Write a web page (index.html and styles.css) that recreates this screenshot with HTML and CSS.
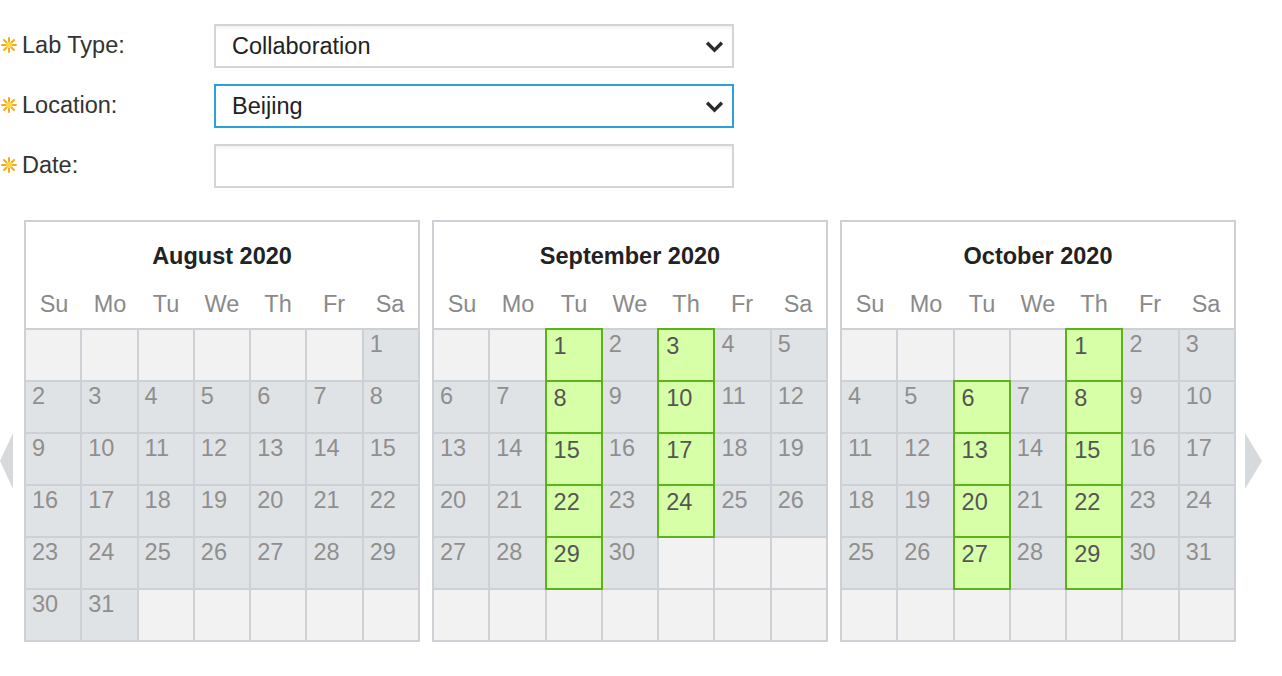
FILE: index.html
```html
<!DOCTYPE html>
<html>
<head>
<meta charset="utf-8">
<link rel="stylesheet" href="styles.css">
</head>
<body>
<div class="form">
  <div class="row">
    <label class="lbl"><svg class="req" viewBox="0 0 16 16"><g stroke="#f7a81b" stroke-width="2" stroke-linecap="round"><line x1="8" y1="1" x2="8" y2="15"/><line x1="1" y1="8" x2="15" y2="8"/><line x1="3" y1="3" x2="13" y2="13"/><line x1="13" y1="3" x2="3" y2="13"/></g><circle cx="8" cy="8" r="3.2" fill="#ffd84a"/></svg>Lab Type:</label>
    <div class="field select"><span>Collaboration</span><svg class="chev" viewBox="0 0 18 12"><path d="M2 2.5 9 9.5 16 2.5" fill="none" stroke="#2b2b2b" stroke-width="3.2"/></svg></div>
  </div>
  <div class="row">
    <label class="lbl"><svg class="req" viewBox="0 0 16 16"><g stroke="#f7a81b" stroke-width="2" stroke-linecap="round"><line x1="8" y1="1" x2="8" y2="15"/><line x1="1" y1="8" x2="15" y2="8"/><line x1="3" y1="3" x2="13" y2="13"/><line x1="13" y1="3" x2="3" y2="13"/></g><circle cx="8" cy="8" r="3.2" fill="#ffd84a"/></svg>Location:</label>
    <div class="field select focus"><span>Beijing</span><svg class="chev" viewBox="0 0 18 12"><path d="M2 2.5 9 9.5 16 2.5" fill="none" stroke="#2b2b2b" stroke-width="3.2"/></svg></div>
  </div>
  <div class="row">
    <label class="lbl"><svg class="req" viewBox="0 0 16 16"><g stroke="#f7a81b" stroke-width="2" stroke-linecap="round"><line x1="8" y1="1" x2="8" y2="15"/><line x1="1" y1="8" x2="15" y2="8"/><line x1="3" y1="3" x2="13" y2="13"/><line x1="13" y1="3" x2="3" y2="13"/></g><circle cx="8" cy="8" r="3.2" fill="#ffd84a"/></svg>Date:</label>
    <div class="field input"></div>
  </div>
</div>

<div class="cals">
  <div class="arrow left"></div>

  <div class="cal">
    <div class="title">August 2020</div>
    <div class="dows"><span>Su</span><span>Mo</span><span>Tu</span><span>We</span><span>Th</span><span>Fr</span><span>Sa</span></div>
    <div class="grid">
      <div class="c e"></div><div class="c e"></div><div class="c e"></div><div class="c e"></div><div class="c e"></div><div class="c e"></div><div class="c">1</div>
      <div class="c">2</div><div class="c">3</div><div class="c">4</div><div class="c">5</div><div class="c">6</div><div class="c">7</div><div class="c">8</div>
      <div class="c">9</div><div class="c">10</div><div class="c">11</div><div class="c">12</div><div class="c">13</div><div class="c">14</div><div class="c">15</div>
      <div class="c">16</div><div class="c">17</div><div class="c">18</div><div class="c">19</div><div class="c">20</div><div class="c">21</div><div class="c">22</div>
      <div class="c">23</div><div class="c">24</div><div class="c">25</div><div class="c">26</div><div class="c">27</div><div class="c">28</div><div class="c">29</div>
      <div class="c">30</div><div class="c">31</div><div class="c e"></div><div class="c e"></div><div class="c e"></div><div class="c e"></div><div class="c e"></div>
    </div>
  </div>

  <div class="cal">
    <div class="title">September 2020</div>
    <div class="dows"><span>Su</span><span>Mo</span><span>Tu</span><span>We</span><span>Th</span><span>Fr</span><span>Sa</span></div>
    <div class="grid">
      <div class="c e"></div><div class="c e"></div><div class="c g">1</div><div class="c">2</div><div class="c g">3</div><div class="c">4</div><div class="c">5</div>
      <div class="c">6</div><div class="c">7</div><div class="c g">8</div><div class="c">9</div><div class="c g">10</div><div class="c">11</div><div class="c">12</div>
      <div class="c">13</div><div class="c">14</div><div class="c g">15</div><div class="c">16</div><div class="c g">17</div><div class="c">18</div><div class="c">19</div>
      <div class="c">20</div><div class="c">21</div><div class="c g">22</div><div class="c">23</div><div class="c g">24</div><div class="c">25</div><div class="c">26</div>
      <div class="c">27</div><div class="c">28</div><div class="c g">29</div><div class="c">30</div><div class="c e"></div><div class="c e"></div><div class="c e"></div>
      <div class="c e"></div><div class="c e"></div><div class="c e"></div><div class="c e"></div><div class="c e"></div><div class="c e"></div><div class="c e"></div>
    </div>
  </div>

  <div class="cal">
    <div class="title">October 2020</div>
    <div class="dows"><span>Su</span><span>Mo</span><span>Tu</span><span>We</span><span>Th</span><span>Fr</span><span>Sa</span></div>
    <div class="grid">
      <div class="c e"></div><div class="c e"></div><div class="c e"></div><div class="c e"></div><div class="c g">1</div><div class="c">2</div><div class="c">3</div>
      <div class="c">4</div><div class="c">5</div><div class="c g">6</div><div class="c">7</div><div class="c g">8</div><div class="c">9</div><div class="c">10</div>
      <div class="c">11</div><div class="c">12</div><div class="c g">13</div><div class="c">14</div><div class="c g">15</div><div class="c">16</div><div class="c">17</div>
      <div class="c">18</div><div class="c">19</div><div class="c g">20</div><div class="c">21</div><div class="c g">22</div><div class="c">23</div><div class="c">24</div>
      <div class="c">25</div><div class="c">26</div><div class="c g">27</div><div class="c">28</div><div class="c g">29</div><div class="c">30</div><div class="c">31</div>
      <div class="c e"></div><div class="c e"></div><div class="c e"></div><div class="c e"></div><div class="c e"></div><div class="c e"></div><div class="c e"></div>
    </div>
  </div>

  <div class="arrow right"></div>
</div>
</body>
</html>
```
FILE: styles.css
```css
html, body {
  margin: 0;
  padding: 0;
  background: #fff;
}
body {
  font-family: "Liberation Sans", Arial, Helvetica, sans-serif;
  color: #333;
}
.form {
  padding-top: 24px;
  display: flex;
  flex-direction: column;
  gap: 16px;
}
.row {
  display: flex;
  align-items: center;
  height: 44px;
}
.lbl {
  width: 214px;
  display: flex;
  align-items: center;
  font-size: 23.5px;
  color: #333;
  margin-top: -2px;
}
.req {
  width: 16px;
  height: 16px;
  margin-left: 1px;
  margin-right: 5px;
}
.field {
  box-sizing: border-box;
  width: 520px;
  height: 44px;
  border: 2px solid #d2d5d8;
  background: #fff;
  box-shadow: inset 0 4px 5px -3px rgba(0, 0, 0, 0.09);
  display: flex;
  align-items: center;
  justify-content: space-between;
  padding: 0 8px 0 16px;
  font-size: 23.5px;
  color: #222;
}
.field.focus {
  border-color: #2aa1d9;
  box-shadow: none;
}
.chev {
  width: 19px;
  height: 13px;
}
.cals {
  margin-top: 32px;
  display: flex;
  align-items: flex-start;
}
.arrow {
  width: 0;
  height: 0;
  margin-top: 213px;
  border-top: 28px solid transparent;
  border-bottom: 28px solid transparent;
}
.arrow.left {
  border-right: 13px solid #d6dadd;
  margin-right: 11px;
}
.arrow.right {
  border-left: 17px solid #d6dadd;
  margin-left: 9px;
}
.cal {
  box-sizing: border-box;
  width: 396px;
  border: 2px solid #cdd1d5;
  background: #fff;
  margin-right: 12px;
}
.cal:nth-last-child(2) {
  margin-right: 0;
}
.title {
  text-align: center;
  font-weight: bold;
  font-size: 23.5px;
  line-height: 24px;
  color: #222;
  padding-top: 22px;
}
.dows {
  display: grid;
  grid-template-columns: repeat(7, 1fr);
  padding: 24px 0 12px;
  font-size: 23.5px;
  line-height: 24px;
  color: #8a8a8a;
  text-align: center;
}
.grid {
  display: grid;
  grid-template-columns: repeat(7, 1fr);
  grid-auto-rows: 50px;
  gap: 2px;
  padding-top: 2px;
  background: #cdd1d5;
}
.c {
  background: #e0e3e6;
  font-size: 23.5px;
  line-height: 24px;
  color: #8f8f8f;
  padding: 2px 6px 0;
}
.c.e {
  background: #f2f2f2;
}
.c.g {
  background: #d7ffa8;
  color: #555;
  padding: 4px 7px 0;
  outline: 2px solid #5cb11c;
  position: relative;
  z-index: 1;
}
```
